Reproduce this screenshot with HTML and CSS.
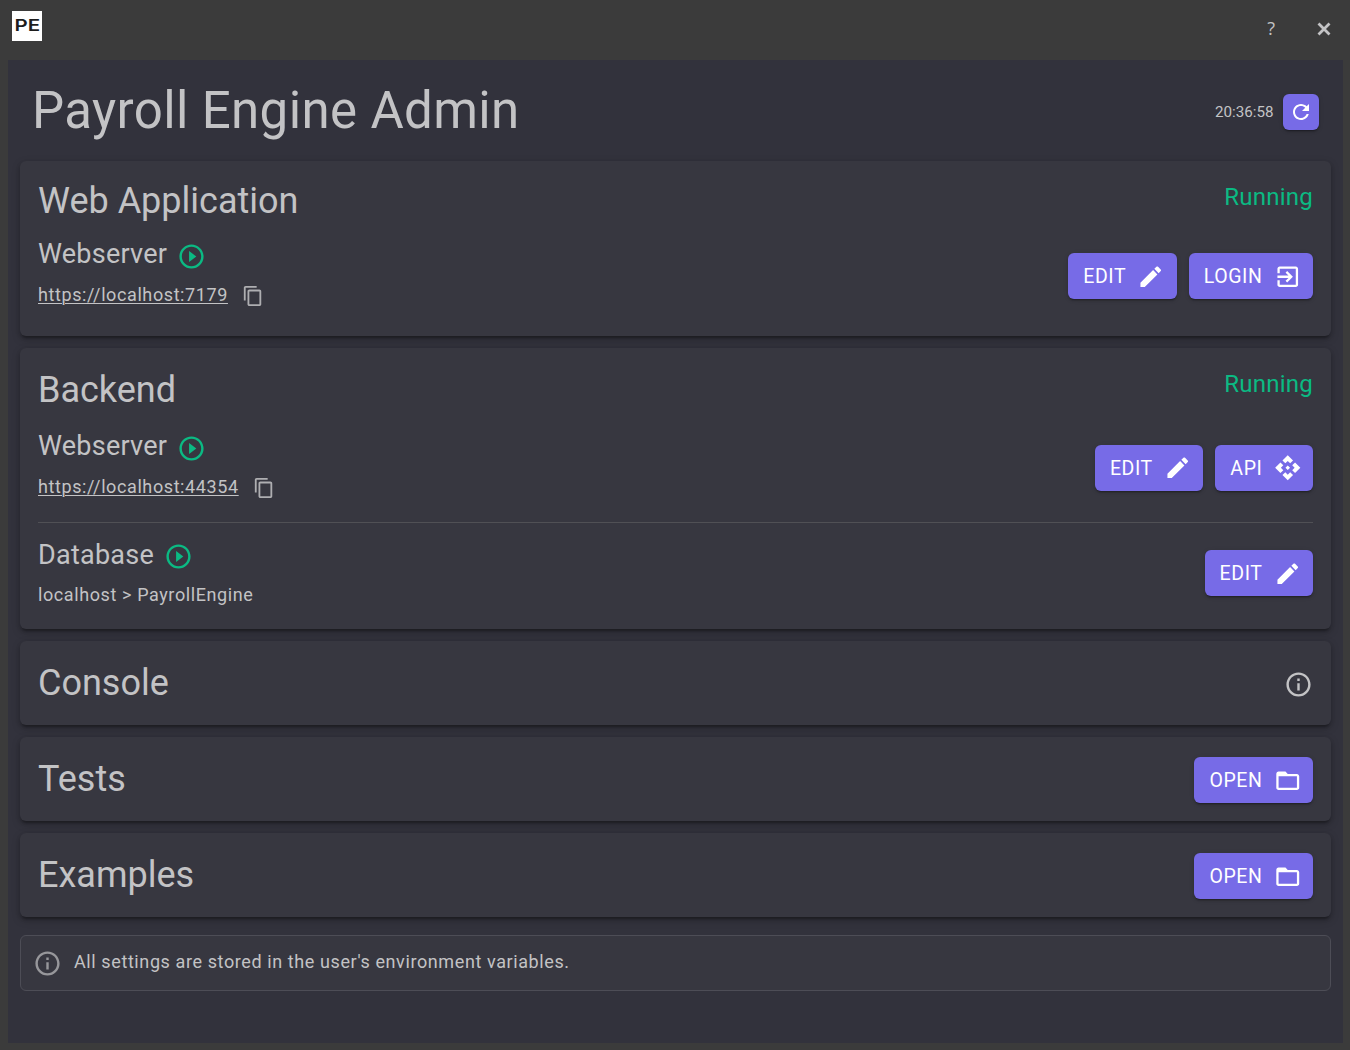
FILE: index.html
```html
<!DOCTYPE html>
<html lang="en">
<head>
<meta charset="utf-8">
<title>Payroll Engine Admin</title>
<link rel="stylesheet" href="styles.css">
</head>
<body>
<svg class="sprite" aria-hidden="true">
  <symbol id="play" viewBox="0 0 24 24"><path d="M10 16.5l6-4.5-6-4.5v9zM12 2C6.48 2 2 6.48 2 12s4.48 10 10 10 10-4.48 10-10S17.52 2 12 2zm0 18c-4.41 0-8-3.59-8-8s3.59-8 8-8 8 3.59 8 8-3.59 8-8 8z"/></symbol>
  <symbol id="copy" viewBox="0 0 24 24"><path d="M16 1H4c-1.1 0-2 .9-2 2v14h2V3h12V1zm3 4H8c-1.1 0-2 .9-2 2v14c0 1.1.9 2 2 2h11c1.1 0 2-.9 2-2V7c0-1.1-.9-2-2-2zm0 16H8V7h11v14z"/></symbol>
  <symbol id="edit" viewBox="0 0 24 24"><path d="M3 17.25V21h3.75L17.81 9.94l-3.75-3.75L3 17.25zM20.71 7.04c.39-.39.39-1.02 0-1.41l-2.34-2.34c-.39-.39-1.02-.39-1.41 0l-1.83 1.83 3.75 3.75 1.83-1.83z"/></symbol>
  <symbol id="login" viewBox="0 0 24 24"><path d="M10.09 15.59L11.5 17l5-5-5-5-1.41 1.41L12.67 11H3v2h9.67l-2.58 2.59zM19 3H5c-1.11 0-2 .9-2 2v4h2V5h14v14H5v-4H3v4c0 1.1.89 2 2 2h14c1.1 0 2-.9 2-2V5c0-1.1-.9-2-2-2z"/></symbol>
  <symbol id="api" viewBox="0 0 24 24"><path d="M14 12l-2 2-2-2 2-2 2 2zM12 6l2.12 2.12 2.5-2.5L12 1 7.38 5.62l2.5 2.5L12 6zM6 12l2.12-2.12-2.5-2.5L1 12l4.62 4.62 2.5-2.5L6 12zM18 12l-2.12 2.12 2.5 2.5L23 12l-4.62-4.62-2.5 2.5L18 12zM12 18l-2.12-2.12-2.5 2.5L12 23l4.62-4.62-2.5-2.5L12 18z"/></symbol>
  <symbol id="folder" viewBox="0 0 24 24"><path d="M20 6h-8l-2-2H4c-1.1 0-1.99.9-1.99 2L2 18c0 1.1.9 2 2 2h16c1.1 0 2-.9 2-2V8c0-1.1-.9-2-2-2zm0 12H4V8h16v10z"/></symbol>
  <symbol id="info" viewBox="0 0 24 24"><path d="M11 7h2v2h-2zm0 4h2v6h-2zm1-9C6.48 2 2 6.48 2 12s4.48 10 10 10 10-4.48 10-10S17.52 2 12 2zm0 18c-4.41 0-8-3.59-8-8s3.59-8 8-8 8 3.59 8 8-3.59 8-8 8z"/></symbol>
  <symbol id="refresh" viewBox="0 0 24 24"><path d="M17.65 6.35C16.2 4.9 14.21 4 12 4c-4.42 0-7.99 3.58-7.99 8s3.57 8 7.99 8c3.73 0 6.84-2.55 7.73-6h-2.08c-.82 2.33-3.04 4-5.65 4-3.31 0-6-2.69-6-6s2.69-6 6-6c1.66 0 3.14.69 4.22 1.78L13 11h7V4l-2.35 2.35z"/></symbol>
</svg>

<header class="titlebar">
  <div class="logo"><span>PE</span></div>
  <div class="window-actions">
    <span class="help">?</span>
    <svg class="close" viewBox="0 0 14 14"><path d="M1.5 1.5l11 11M12.5 1.5l-11 11"/></svg>
  </div>
</header>

<main class="page">
  <div class="page-head">
    <h1>Payroll Engine Admin</h1>
    <div class="refresh">
      <span class="time">20:36:58</span>
      <button class="btn btn-icon"><svg><use href="#refresh"/></svg></button>
    </div>
  </div>

  <section class="card webapp">
    <div class="card-head"><h2>Web Application</h2><span class="status">Running</span></div>
    <div class="row">
      <div>
        <div class="service"><h3>Webserver</h3><svg class="play"><use href="#play"/></svg></div>
        <div class="address"><a href="#">https://localhost:7179</a><svg class="copy"><use href="#copy"/></svg></div>
      </div>
      <div class="actions">
        <button class="btn">EDIT<svg><use href="#edit"/></svg></button>
        <button class="btn">LOGIN<svg><use href="#login"/></svg></button>
      </div>
    </div>
  </section>

  <section class="card backend">
    <div class="card-head"><h2>Backend</h2><span class="status">Running</span></div>
    <div class="row server">
      <div>
        <div class="service"><h3>Webserver</h3><svg class="play"><use href="#play"/></svg></div>
        <div class="address"><a href="#">https://localhost:44354</a><svg class="copy"><use href="#copy"/></svg></div>
      </div>
      <div class="actions">
        <button class="btn">EDIT<svg><use href="#edit"/></svg></button>
        <button class="btn">API<svg><use href="#api"/></svg></button>
      </div>
    </div>
    <hr>
    <div class="row database">
      <div>
        <div class="service"><h3>Database</h3><svg class="play"><use href="#play"/></svg></div>
        <div class="address"><span>localhost &gt; PayrollEngine</span></div>
      </div>
      <div class="actions">
        <button class="btn">EDIT<svg><use href="#edit"/></svg></button>
      </div>
    </div>
  </section>

  <section class="card compact"><h2>Console</h2><svg class="info"><use href="#info"/></svg></section>
  <section class="card compact"><h2>Tests</h2><button class="btn">OPEN<svg><use href="#folder"/></svg></button></section>
  <section class="card compact"><h2>Examples</h2><button class="btn">OPEN<svg><use href="#folder"/></svg></button></section>

  <div class="alert"><svg><use href="#info"/></svg><span>All settings are stored in the user's environment variables.</span></div>
</main>
</body>
</html>
```
FILE: styles.css
```css
* { box-sizing: border-box; }

body {
  margin: 0;
  height: 1050px;
  padding: 0 7px 7px 8px;
  display: flex;
  flex-direction: column;
  background: #3b3b3b;
  color: #c3c3c5;
  font-family: Roboto, sans-serif;
  overflow: hidden;
}

h1, h2, h3 { margin: 0; font-weight: 400; white-space: nowrap; }
svg { display: block; fill: currentColor; flex: none; }
.sprite { position: absolute; width: 0; height: 0; }

.titlebar {
  height: 60px;
  flex: none;
  padding: 11px 12px 0 4px;
  display: flex;
  justify-content: space-between;
  align-items: flex-start;
}

.logo {
  width: 30px;
  height: 30px;
  background: #fff;
  color: #1d1d1d;
  display: flex;
  justify-content: center;
  font: 600 16.5px/28px Inter, sans-serif;
}
.logo span { transform: scaleX(1.24); }

.window-actions { display: flex; align-items: center; gap: 42px; height: 35px; }
.help { margin-top: -2px; font: 18px/34px "Open Sans", sans-serif; }
.close { width: 14px; height: 14px; fill: none; stroke: currentColor; stroke-width: 2.8; }

.page {
  flex: 1;
  padding: 0 12px;
  background: #32323c;
}

.page-head {
  height: 101px;
  padding: 20px 12px 0 12px;
  display: flex;
  justify-content: space-between;
}
h1 { margin-top: 1px; font-size: 51px; line-height: 60px; letter-spacing: 0.00735em; }

.refresh { display: flex; gap: 9.5px; padding-top: 14px; }
.time { font-size: 15.2px; line-height: 36px; }

.card {
  margin-bottom: 12px;
  padding: 0 18px;
  background: #373740;
  border-radius: 6px;
  box-shadow: 0 4px 2px -2px rgba(0,0,0,.2), 0 2px 4px rgba(0,0,0,.14), 0 3px 9px rgba(0,0,0,.22);
}
.webapp { height: 175px; padding-top: 16px; }
.backend { height: 281px; padding-top: 18px; }

.card-head { display: flex; justify-content: space-between; margin-bottom: 11px; }
.backend .card-head { margin-bottom: 14px; }
h2 { font-size: 36px; line-height: 48px; }
.status { margin-top: 4px; color: #0bba83; font-size: 24px; line-height: 32px; letter-spacing: 0.01em; }
.backend .status { margin-top: 2px; }

.row { height: 80px; display: flex; justify-content: space-between; }
.database { height: 72px; }
.service { display: flex; height: 45px; gap: 10px; }
.database .service { height: 44px; }
h3 { font-size: 27px; line-height: 37px; letter-spacing: 0.009em; }
.play { width: 29px; height: 29px; margin-top: 5.5px; color: #0bba83; }
.database .play { margin-top: 4.5px; }

.address {
  display: flex;
  gap: 14px;
  font-size: 18px;
  line-height: 28px;
  letter-spacing: 0.6px;
}
.address a { color: inherit; text-underline-offset: 2px; text-decoration-thickness: 1px; }
.copy { width: 22px; height: 22px; margin-top: 4.4px; opacity: .85; }
.server .copy { margin-top: 3.5px; }

.actions { display: flex; align-items: center; gap: 12px; }

.btn {
  height: 46px;
  padding: 1px 12px 0 15px;
  display: flex;
  align-items: center;
  gap: 11px;
  border: 0;
  border-radius: 6px;
  background: #776be7;
  color: #fff;
  font: 400 19.5px/44px Roboto, sans-serif;
  letter-spacing: 0.6px;
  box-shadow: 0 3px 1px -2px rgba(0,0,0,.2), 0 2px 2px rgba(0,0,0,.14), 0 1px 5px rgba(0,0,0,.12);
}
.btn svg { width: 27.5px; height: 27.5px; }
.server .btn svg { margin-top: -2px; }
.btn-icon { width: 36px; height: 36px; padding: 0; justify-content: center; }
.btn-icon svg { width: 24px; height: 24px; }

hr { height: 1px; margin: 14px 0; border: 0; background: #505055; }

.compact {
  height: 84px;
  display: flex;
  justify-content: space-between;
  align-items: center;
}
.compact h2 { margin-top: -1px; }
.compact .btn { margin-top: 2px; }
.info { width: 29px; height: 29px; margin: 3px 0 0; }

.alert {
  height: 56px;
  margin-top: 18px;
  padding: 0 12px;
  display: flex;
  align-items: center;
  gap: 12px;
  border: 1px solid #4d4d56;
  border-radius: 6px;
  background: #373740;
  font-size: 18px;
  line-height: 28px;
  letter-spacing: 0.6px;
}
.alert svg { width: 29px; height: 29px; color: #97979b; }
.alert span { margin-top: -3px; }
```
